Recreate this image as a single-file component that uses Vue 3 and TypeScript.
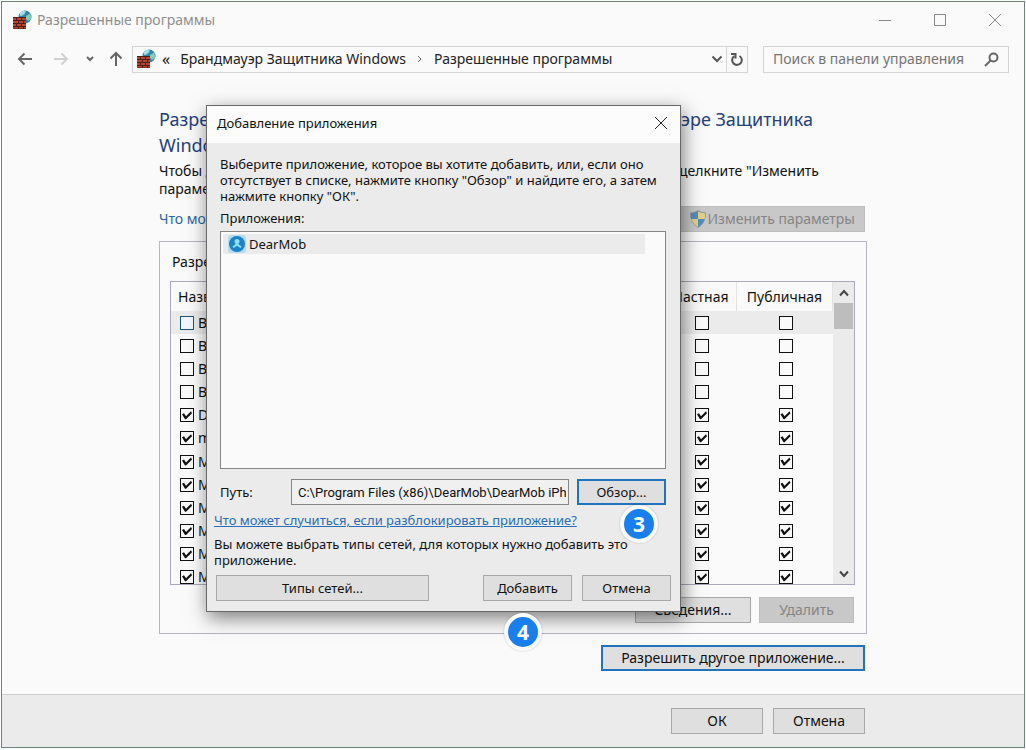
<script setup lang="ts">
import { ref } from 'vue'

interface Rule {
  id: number
  name: string
  enabled: boolean
  domestic: boolean
  open: boolean
}

const entries: [string, boolean][] = [
  ['BITS', false],
  ['BranchCache', false],
  ['BranchServer', false],
  ['Bonjour', false],
  ['DearMob', true],
  ['mDNS', true],
  ['Maps', true],
  ['Mail', true],
  ['Media', true],
  ['Messaging', true],
  ['Mobile', true],
  ['Movies', true],
]

const rules = ref<Rule[]>(
  entries.map(([name, on], id) => ({ id, name, enabled: on, domestic: on, open: on })),
)
const path = ref('C:\\Program Files (x86)\\DearMob\\DearMob iPh')
const query = ref('')
</script>

<template>
  <div class="window">
    <svg width="0" height="0" class="defs" aria-hidden="true">
      <symbol id="firewall" viewBox="0 0 20 20">
        <circle cx="13" cy="7" r="6.500" fill="#2f86a8" />
        <path d="M9 2.500q3-2 5-1.500l-1 3-3 2-2.500 0zM14 6l4-2.500q1.800 3 1 5.500l-3 2-2-2z" fill="#7fcdb8" />
        <path d="M8 3q2-2.500 5-2.500l-1 3-4 2z" fill="#a9e2f2" />
        <rect x="1" y="7" width="13" height="12" fill="#4f1d16" />
        <path d="M1 8h3v2H1zM5 8h4v2H5zM10 8h4v2h-4zM1 11h5v2H1zM7 11h4v2H7zM12 11h2v2h-2zM1 14h3v2H1zM5 14h4v2H5zM10 14h4v2h-4zM1 17h5v1.500H1zM7 17h4v1.500H7zM12 17h2v1.500h-2z" fill="#b9452f" />
      </symbol>
    </svg>

    <header class="titlebar">
      <svg class="app-icon" aria-hidden="true"><use href="#firewall" /></svg>
      <span class="title">Разрешенные программы</span>
      <div class="controls">
        <button type="button" aria-label="Свернуть">
          <svg width="14" height="14" viewBox="0 0 14 14"><path d="M1 7.500h12" /></svg>
        </button>
        <button type="button" aria-label="Развернуть">
          <svg width="14" height="14" viewBox="0 0 14 14"><path d="M1.500 1.500h11v11h-11z" /></svg>
        </button>
        <button type="button" aria-label="Закрыть">
          <svg width="14" height="14" viewBox="0 0 14 14"><path d="M1 1l12 12M13 1L1 13" /></svg>
        </button>
      </div>
    </header>

    <nav class="toolbar">
      <button type="button" class="nav back" aria-label="Назад">
        <svg width="16" height="14" viewBox="0 0 16 14"><path d="M15 7H2M7.500 1.500L2 7l5.500 5.500" /></svg>
      </button>
      <button type="button" class="nav forward" aria-label="Вперед" disabled>
        <svg width="16" height="14" viewBox="0 0 16 14"><path d="M1 7h13M8.500 1.500L14 7l-5.500 5.500" /></svg>
      </button>
      <button type="button" class="nav recent" aria-label="Последние расположения">
        <svg width="8" height="6" viewBox="0 0 8 6"><path d="M1 1l3 3 3-3" /></svg>
      </button>
      <button type="button" class="nav up" aria-label="Вверх">
        <svg width="14" height="16" viewBox="0 0 14 16"><path d="M7 15V2M1.500 7.500L7 2l5.500 5.500" /></svg>
      </button>
      <div class="address">
        <svg class="app-icon" aria-hidden="true"><use href="#firewall" /></svg>
        <span class="more">«</span>
        <a href="#firewall-home">Брандмауэр Защитника Windows</a>
        <svg class="crumb" width="6" height="8" viewBox="0 0 6 8"><path d="M1 1l3 3-3 3" /></svg>
        <a href="#allowed">Разрешенные программы</a>
        <button type="button" class="drop" aria-label="Список адресов">
          <svg width="12" height="8" viewBox="0 0 12 8"><path d="M1.500 1.500L6 6l4.500-4.500" /></svg>
        </button>
        <button type="button" class="refresh" aria-label="Обновить">
          <svg width="14" height="14" viewBox="0 0 14 14"><path d="M9.500 4A4.800 4.800 0 1 1 4 4.300M1 2h4.500v4.500" /></svg>
        </button>
      </div>
      <label class="search">
        <input v-model="query" type="text" placeholder="Поиск в панели управления" aria-label="Поиск" />
        <svg width="15" height="15" viewBox="0 0 15 15"><circle cx="9.500" cy="5.500" r="4" /><path d="M6.500 8.500L1 14" /></svg>
      </label>
    </nav>

    <main class="content">
      <h1>
        <span class="line"><span>Разрешение</span><span>в брандмауэре Защитника</span></span>
        <span class="line">Windows</span>
      </h1>
      <p class="intro">
        <span class="line"><span>Чтобы добавить,</span><span>щелкните "Изменить</span></span>
        <span class="line">параметры".</span>
      </p>
      <div class="risk">
        <a href="#risk">Что может</a>
        <button type="button" class="btn off change" disabled>
          <svg width="18" height="20" viewBox="0 0 18 20">
            <path d="M9 1q4 2.500 8 2.500Q17.500 14 9 19 .5 14 1 3.500 5 3.500 9 1z" fill="#8d9aa0" />
            <path d="M9 2.500V10H2.200Q2 7.500 2 4.500 6 4.200 9 2.500z" fill="#4f8fc0" />
            <path d="M9 2.500V10h6.800q.2-2.500.2-5.500-4-.3-7-2z" fill="#e6cf86" />
            <path d="M9 10v8Q3.500 14.500 2.200 10z" fill="#e6cf86" />
            <path d="M9 10v8q5.500-3.500 6.800-8z" fill="#4f8fc0" />
          </svg>
          Изменить параметры
        </button>
      </div>

      <section class="group">
        <h2>Разрешенные</h2>
        <div class="listbox">
          <table>
            <thead>
              <tr>
                <th class="name">Название</th>
                <th class="private">Частная</th>
                <th class="public">Публичная</th>
              </tr>
            </thead>
            <tbody>
              <tr v-for="rule in rules" :key="rule.id">
                <td class="name">
                  <label><input v-model="rule.enabled" type="checkbox" />{{ rule.name }}</label>
                </td>
                <td><input v-model="rule.domestic" type="checkbox" :aria-label="rule.name + ', частная'" /></td>
                <td><input v-model="rule.open" type="checkbox" :aria-label="rule.name + ', публичная'" /></td>
              </tr>
            </tbody>
          </table>
          <div class="scroll">
            <button type="button" aria-label="Прокрутить вверх">
              <svg width="10" height="8" viewBox="0 0 10 8"><path d="M1 6.500L5 2l4 4.500" /></svg>
            </button>
            <div class="thumb"></div>
            <button type="button" class="down" aria-label="Прокрутить вниз">
              <svg width="10" height="8" viewBox="0 0 10 8"><path d="M1 1.500L5 6l4-4.500" /></svg>
            </button>
          </div>
        </div>
        <div class="actions">
          <button type="button" class="btn details">Сведения...</button>
          <button type="button" class="btn off remove" disabled>Удалить</button>
        </div>
      </section>
      <button type="button" class="btn primary another">Разрешить другое приложение...</button>
    </main>

    <footer class="footer">
      <div class="footer-row">
        <button type="button" class="btn">ОК</button>
        <button type="button" class="btn">Отмена</button>
      </div>
    </footer>

    <div class="dialog" role="dialog" aria-labelledby="dialog-title">
      <div class="dialog-bar">
        <span id="dialog-title">Добавление приложения</span>
        <button type="button" aria-label="Закрыть диалог">
          <svg width="14" height="14" viewBox="0 0 14 14"><path d="M1 1l12 12M13 1L1 13" /></svg>
        </button>
      </div>
      <div class="dialog-body">
        <div class="inset">
          <p>
            Выберите приложение, которое вы хотите добавить, или, если оно<br />
            отсутствует в списке, нажмите кнопку "Обзор" и найдите его, а затем<br />
            нажмите кнопку "ОК".
          </p>
          <div id="apps-label" class="apps-label">Приложения:</div>
          <ul class="apps" aria-labelledby="apps-label">
            <li>
              <svg width="18" height="18" viewBox="0 0 18 18">
                <rect width="18" height="18" rx="3" fill="#b5dcf2" />
                <circle cx="9" cy="9" r="8" fill="#1b84c8" />
                <circle cx="9" cy="6.500" r="2.500" fill="#8fe0fa" />
                <path d="M4.500 11.500L9 8l4.500 3.500-1 1.500L9 10.800 5.500 13z" fill="#8fe0fa" />
              </svg>
              DearMob
            </li>
          </ul>
          <div class="path">
            <label for="path">Путь:</label>
            <input id="path" v-model="path" type="text" />
            <button type="button" class="btn primary">Обзор...</button>
          </div>
        </div>
        <a class="help" href="#unblock">Что может случиться, если разблокировать приложение?</a>
        <p>Вы можете выбрать типы сетей, для которых нужно добавить это<br />приложение.</p>
        <div class="dialog-actions">
          <button type="button" class="btn types">Типы сетей...</button>
          <button type="button" class="btn">Добавить</button>
          <button type="button" class="btn">Отмена</button>
        </div>
      </div>
      <span class="badge three">3</span>
      <span class="badge four">4</span>
    </div>
  </div>
</template>

<style>
body {
  margin: 0;
  background: #fff;
}
</style>

<style scoped>
* {
  box-sizing: border-box;
}

.window {
  position: relative;
  display: flex;
  flex-direction: column;
  min-height: calc(100vh - 3px);
  margin: 1px 1px 2px;
  border: 1px solid #6c8577;
  background: #fafafa;
  color: #111;
  font: 14px/20px "Noto Sans", "Open Sans", sans-serif;
}

.defs {
  position: absolute;
}

button {
  margin: 0;
  padding: 0;
  border: 0;
  background: none;
  color: inherit;
  font: inherit;
}

svg {
  flex: none;
  fill: none;
  stroke-width: 1;
}

.app-icon {
  width: 20px;
  height: 20px;
}

.titlebar {
  display: flex;
  align-items: center;
  height: 36px;
  padding: 0 2px 0 10px;
}

.title {
  margin-left: 5px;
  color: #909090;
}

.controls {
  display: flex;
  margin-left: auto;
}

.controls button {
  display: flex;
  align-items: center;
  justify-content: center;
  width: 55px;
  height: 34px;
}

.controls svg {
  stroke: #888;
}

.toolbar {
  display: flex;
  align-items: center;
  height: 44px;
  padding: 0 15px 2px;
}

.nav {
  display: flex;
  align-items: center;
}

.nav svg {
  stroke: #666;
  stroke-width: 2;
}

.forward {
  margin-left: 20px;
}

.forward svg {
  stroke: #d0d0d0;
}

.recent {
  margin-left: 17px;
}

.up {
  margin-left: 15px;
}

.address {
  display: flex;
  flex: 1;
  align-items: center;
  height: 27px;
  margin-left: 9px;
  padding-left: 3px;
  border: 1px solid #d4d4d4;
}

.address a {
  color: #222;
  text-decoration: none;
}

.more {
  margin: 0 10px 0 6px;
  font-size: 16px;
}

.crumb {
  margin: 0 11px;
  stroke: #666;
}

.drop {
  display: flex;
  margin-left: auto;
  margin-right: 3px;
}

.drop svg,
.refresh svg {
  stroke: #555;
  stroke-width: 2;
}

.refresh {
  display: flex;
  align-items: center;
  justify-content: center;
  width: 21px;
  height: 25px;
  border-left: 1px solid #d4d4d4;
}

.search {
  display: flex;
  align-items: center;
  width: 246px;
  height: 27px;
  margin-left: 15px;
  padding: 0 9px 0 9px;
  border: 1px solid #d4d4d4;
}

.search input {
  flex: 1;
  width: 0;
  padding: 0;
  border: 0;
  outline: 0;
  background: none;
  font: inherit;
}

.search input::placeholder {
  color: #757575;
  opacity: 1;
}

.search svg {
  stroke: #666;
  stroke-width: 2;
}

.content {
  display: flex;
  flex: 1;
  flex-direction: column;
  width: 708px;
  max-width: 100%;
  margin: 0 auto;
  padding: 24px 0 23px;
}

h1,
h2,
p {
  margin: 0;
  font-weight: 400;
}

h1 {
  color: #24407f;
  font-size: 18px;
  line-height: 26px;
}

.line {
  display: flex;
  justify-content: space-between;
}

h1 .line {
  padding-right: 54px;
}

.intro {
  margin-top: 4px;
  line-height: 18px;
}

.intro .line {
  padding-right: 48px;
}

.risk {
  display: flex;
  align-items: center;
  justify-content: space-between;
  margin: 8px 2px 9px 0;
}

.risk a {
  color: #2a66a8;
  text-decoration: none;
}

.btn {
  height: 26px;
  border: 1px solid #a8a8a8;
  background: #dfdfdf;
  line-height: 20px;
  white-space: nowrap;
}

.off {
  border-color: #bdbdbd;
  background: #c8c8c8;
  color: #858585;
}

.primary {
  border: 2px solid #2173bd;
}

.change {
  display: flex;
  align-items: center;
  justify-content: flex-end;
  gap: 1px;
  width: 187px;
  padding: 0 9px 0 0;
}

.group {
  display: flex;
  flex-direction: column;
  height: 393px;
  padding: 10px 11px 10px 10px;
  border: 1px solid #b4b4c2;
}

h2 {
  padding-left: 2px;
  font-size: 14px;
  line-height: 20px;
}

.listbox {
  display: flex;
  flex: 1;
  min-height: 0;
  margin-top: 9px;
  overflow: hidden;
  border: 1px solid #a9a9ba;
}

table {
  flex: 1;
  align-self: flex-start;
  height: 307px;
  border-collapse: collapse;
  table-layout: fixed;
}

th {
  height: 29px;
  padding: 0;
  border-right: 1px solid #e3e3e3;
  font-weight: 400;
}

th.name {
  padding-left: 7px;
  text-align: left;
}

.private {
  width: 71px;
}

.public {
  width: 96px;
}

td {
  height: 23px;
  padding: 0 0 0 2px;
  line-height: 0;
  text-align: center;
}

td.name {
  padding-left: 9px;
  text-align: left;
}

td label {
  display: flex;
  align-items: center;
  gap: 4px;
  line-height: 22px;
}

tbody tr:first-child {
  background: #ebebeb;
}

td input {
  display: inline-block;
  width: 14px;
  height: 14px;
  margin: 0;
  border: 1px solid #111;
  outline: 0;
  appearance: none;
  background: #fafafa;
}

tbody tr:first-child .name input {
  border-color: #1c5478;
  background: #eef8fd;
}

td input:checked::before {
  display: block;
  width: 12px;
  height: 12px;
  background: #111;
  clip-path: polygon(1px 5px, 3px 4px, 5px 7px, 10px 2px, 11px 4px, 5px 10px, 4px 10px);
  content: "";
}

.scroll {
  display: flex;
  flex-direction: column;
  width: 21px;
  padding-left: 1px;
  background: #ebebeb;
}

.scroll button {
  display: flex;
  align-items: center;
  justify-content: center;
  width: 19px;
  height: 21px;
}

.scroll svg {
  stroke: #444;
  stroke-width: 2;
}

.thumb {
  width: 19px;
  height: 26px;
  background: #bdbdbd;
}

.scroll .down {
  margin-top: auto;
}

.actions {
  display: flex;
  gap: 8px;
  justify-content: flex-end;
  margin-top: 12px;
  padding-right: 1px;
}

.details {
  width: 116px;
}

.remove {
  width: 95px;
}

.another {
  align-self: flex-end;
  width: 264px;
  margin: 11px 2px 0 0;
}

.footer {
  padding: 13px 0;
  border-top: 1px solid #cfcfcf;
  background: #ebebeb;
}

.footer-row {
  display: flex;
  gap: 10px;
  justify-content: flex-end;
  width: 708px;
  max-width: 100%;
  margin: 0 auto;
  padding-right: 2px;
}

.footer-row .btn {
  width: 92px;
}

.dialog {
  position: absolute;
  top: 103px;
  left: 204px;
  width: 475px;
  border: 1px solid #686868;
  background: #ebebeb;
  box-shadow: 2px 6px 18px rgba(0, 0, 0, 0.5);
  font-size: 13px;
  line-height: 16px;
}

.dialog-bar {
  display: flex;
  align-items: center;
  justify-content: space-between;
  height: 37px;
  padding: 0 12px 3px 10px;
  background: #fcfcfc;
}

.dialog-bar svg {
  display: block;
  stroke: #222;
}

.dialog-body {
  padding: 13px 9px 10px 7px;
}

.inset {
  padding: 0 5px 0 6px;
}

.dialog p {
  white-space: nowrap;
}

.apps-label {
  margin-top: 6px;
}

.apps {
  height: 238px;
  margin: 5px 0 10px;
  padding: 2px 20px 0 2px;
  border: 1px solid #858585;
  background: #fafafa;
  list-style: none;
}

.apps li {
  display: flex;
  align-items: center;
  gap: 3px;
  height: 20px;
  padding-left: 5px;
  background: #ebebeb;
}

.path {
  display: flex;
  align-items: center;
}

.path label {
  width: 71px;
}

.path input {
  flex: 1;
  width: 0;
  height: 26px;
  padding: 0 2px 0 6px;
  border: 1px solid #858585;
  outline: 0;
  background: #f0f0f0;
  color: inherit;
  font: 13px/16px Roboto, "Noto Sans", sans-serif;
}

.path .btn {
  width: 89px;
  margin-left: 8px;
}

.help {
  display: block;
  margin: 7px 0 8px;
  color: #2a6cb5;
  white-space: nowrap;
}

.dialog-actions {
  display: flex;
  margin-top: 7px;
  padding-left: 2px;
}

.dialog-actions .btn {
  width: 89px;
  margin-left: 10px;
}

.dialog-actions .types {
  width: 213px;
  margin: 0 auto 0 0;
}

.badge {
  position: absolute;
  width: 38px;
  height: 38px;
  border: 4px solid #fafafa;
  border-radius: 50%;
  background: #177ff0;
  box-shadow: 0 0 2px rgba(0, 0, 0, 0.25);
  color: #fff;
  font: bold 21px/30px "Noto Sans", sans-serif;
  text-align: center;
}

.three {
  top: 399px;
  left: 413px;
}

.four {
  top: 507px;
  left: 297px;
}
</style>
